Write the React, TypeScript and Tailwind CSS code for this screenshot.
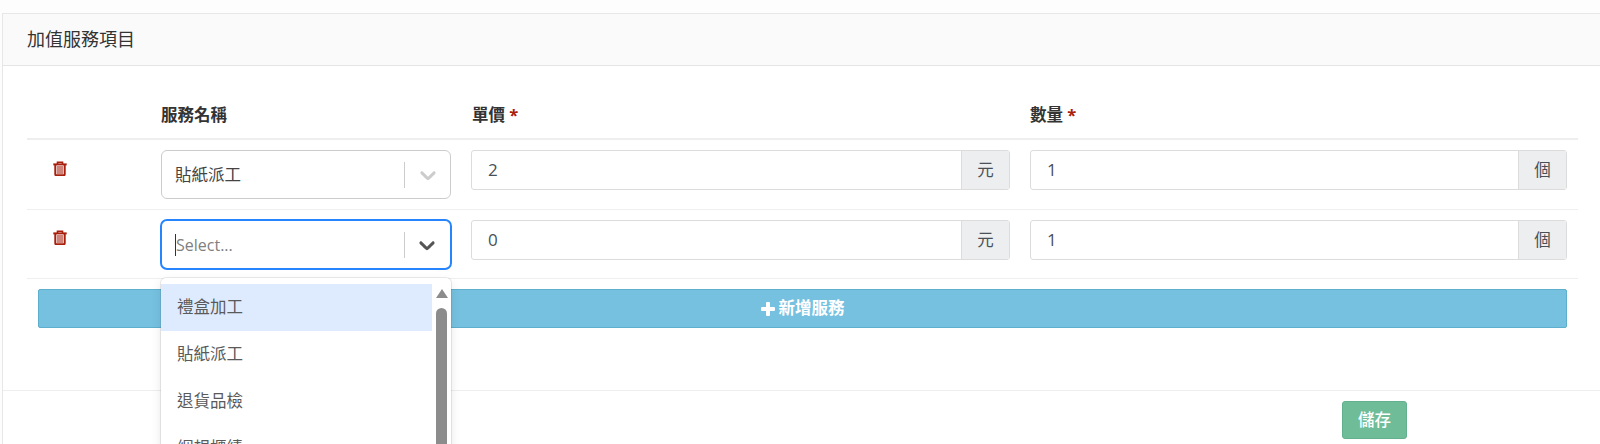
const font = { fontFamily: '"Open Sans", "Noto Sans CJK TC", sans-serif' }

const options = ["禮盒加工", "貼紙派工", "退貨品檢", "綑規櫃績"]

function Chevron({ color }: { color: string }) {
  return (
    <svg width="26" height="26" viewBox="0 0 20 20" fill={color}>
      <path d="M4.516 7.548c0.436-0.446 1.043-0.481 1.576 0l3.908 3.747 3.908-3.747c0.533-0.481 1.141-0.446 1.574 0 0.436 0.445 0.408 1.197 0 1.615-0.406 0.418-4.695 4.502-4.695 4.502-0.217 0.223-0.502 0.335-0.787 0.335s-0.57-0.112-0.789-0.335c0 0-4.287-4.084-4.695-4.502s-0.436-1.17 0-1.615z" />
    </svg>
  )
}

function Trash() {
  return (
    <svg width="14" height="15" viewBox="0 0 14 15" fill="none" stroke="#a8200d">
      <path d="M4.5 3V1.3h5V3" strokeWidth="1.6" />
      <path d="M0.3 3.4h13.4" strokeWidth="2" />
      <path d="M2.3 3.5v9.7a1 1 0 0 0 1 1h7.4a1 1 0 0 0 1-1V3.5" strokeWidth="2" />
      <path d="M5 5v8M7 5v8M9 5v8" strokeWidth="1.1" />
    </svg>
  )
}

function Plus() {
  return (
    <svg width="14" height="14" viewBox="0 0 14 14" fill="#ffffff">
      <path d="M5 1a1 1 0 0 1 1-1h2a1 1 0 0 1 1 1v4h4a1 1 0 0 1 1 1v2a1 1 0 0 1-1 1H9v4a1 1 0 0 1-1 1H6a1 1 0 0 1-1-1V9H1a1 1 0 0 1-1-1V6a1 1 0 0 1 1-1h4z" />
    </svg>
  )
}

function InputGroup({ value, unit }: { value: string; unit: string }) {
  return (
    <div className="flex h-[40px] rounded-[3px] border border-[#dcdcdc] bg-white">
      <div className="flex flex-1 items-center pl-[16px] text-[17px] text-[#495057]">{value}</div>
      <div className="flex w-[48px] items-center justify-center border-l border-[#dcdcdc] bg-[#eceeef] text-[16.5px] text-[#495057]">
        {unit}
      </div>
    </div>
  )
}

function Dropdown() {
  return (
    <div className="absolute left-px top-full z-10 mt-[8px] flex h-[200px] w-[290px] overflow-hidden rounded-[5px] bg-white pt-[6px] shadow-[0_0_0_1px_rgba(0,0,0,0.08),0_4px_11px_rgba(0,0,0,0.1)]">
      <div className="w-[271px]">
        {options.map((name, i) => (
          <div
            key={name}
            className={`flex h-[47px] items-center pl-[16px] text-[16.5px] text-[#5a5a5a] ${i === 0 ? "bg-[#deebff]" : ""}`}
          >
            {name}
          </div>
        ))}
      </div>
      <div className="ml-[3px] flex w-[13px] flex-col items-center pt-[5px]">
        <div className="h-0 w-0 border-x-[6.5px] border-b-[9px] border-x-transparent border-b-[#8c8c8c]" />
        <div className="mt-[10px] w-[11px] flex-1 rounded-t-[6px] bg-[#8c8c8c]" />
      </div>
    </div>
  )
}

function Row({ price, focused }: { price: string; focused?: boolean }) {
  return (
    <div
      className={`grid grid-cols-[124px_310px_559px_1fr] border-b border-[#efefef] ${focused ? "h-[69px] pt-[9px]" : "h-[70px] pt-[10px]"}`}
    >
      <div className="pl-[26px] pt-[11px]">
        <Trash />
      </div>
      <div className="relative px-[10px]">
        {focused ? (
          <div className="relative -mx-px">
            <div className="flex h-[51px] items-center rounded-[7px] border-2 border-[#2684ff] bg-white pl-[13px]">
              <span className="h-[22px] w-px bg-[#333]" />
              <span className="flex-1 text-[16px] text-[#808080]">Select...</span>
              <span className="h-[26px] w-px bg-[#cccccc]" />
              <span className="ml-[9px] mr-[10px] flex"><Chevron color="#555555" /></span>
            </div>
            <Dropdown />
          </div>
        ) : (
          <div className="flex h-[49px] items-center rounded-[6px] border border-[#cccccc] bg-white pl-[13px]">
            <span className="flex-1 pt-px text-[16.5px] text-[#444]">貼紙派工</span>
            <span className="h-[26px] w-px bg-[#cccccc]" />
            <span className="ml-[10px] mr-[9px] flex"><Chevron color="#cccccc" /></span>
          </div>
        )}
      </div>
      <div className={`px-[10px] ${focused ? "pt-px" : ""}`}>
        <InputGroup value={price} unit="元" />
      </div>
      <div className={`pl-[10px] pr-[11px] ${focused ? "pt-px" : ""}`}>
        <InputGroup value="1" unit="個" />
      </div>
    </div>
  )
}

export default function App() {
  return (
    <div className="h-[444px] overflow-hidden bg-[#fdfdfd] pl-[2px] pt-[13px]" style={font}>
      <div className="border-l border-t border-[#e7e7e7] bg-white">
        <div className="flex h-[52px] items-center border-b border-[#e4e4e4] bg-[#fafafa] pl-[24px] text-[18px] text-[#333]">
          加值服務項目
        </div>

        <div className="h-[324px] pl-[24px] pr-[22px] pt-[25px]">
          <div className="grid h-[49px] grid-cols-[124px_310px_559px_1fr] items-center border-b-2 border-[#eeeeee] pt-[2px] text-[16.5px] font-bold text-[#333]">
            <div />
            <div className="px-[10px]">服務名稱</div>
            <div className="px-[11px]">
              單價 <span className="text-[#a8200d]">*</span>
            </div>
            <div className="px-[10px]">
              數量 <span className="text-[#a8200d]">*</span>
            </div>
          </div>

          <Row price="2" />
          <Row price="0" focused />

          <div className="pl-[11px] pr-[11px] pt-[10px]">
            <button className="flex h-[39px] w-full items-center justify-center gap-[4px] rounded-[2px] border border-[#5eaecd] bg-[#76c1e0] text-[16.5px] font-bold text-white">
              <Plus />
              新增服務
            </button>
          </div>
        </div>

        <div className="flex h-[60px] justify-end border-t border-[#eeeeee] pr-[193px] pt-[10px]">
          <button className="h-[38px] w-[65px] rounded-[3px] border border-[#62b08e] bg-[#6fbc98] text-[16.5px] font-medium text-white">
            儲存
          </button>
        </div>
      </div>
    </div>
  )
}
